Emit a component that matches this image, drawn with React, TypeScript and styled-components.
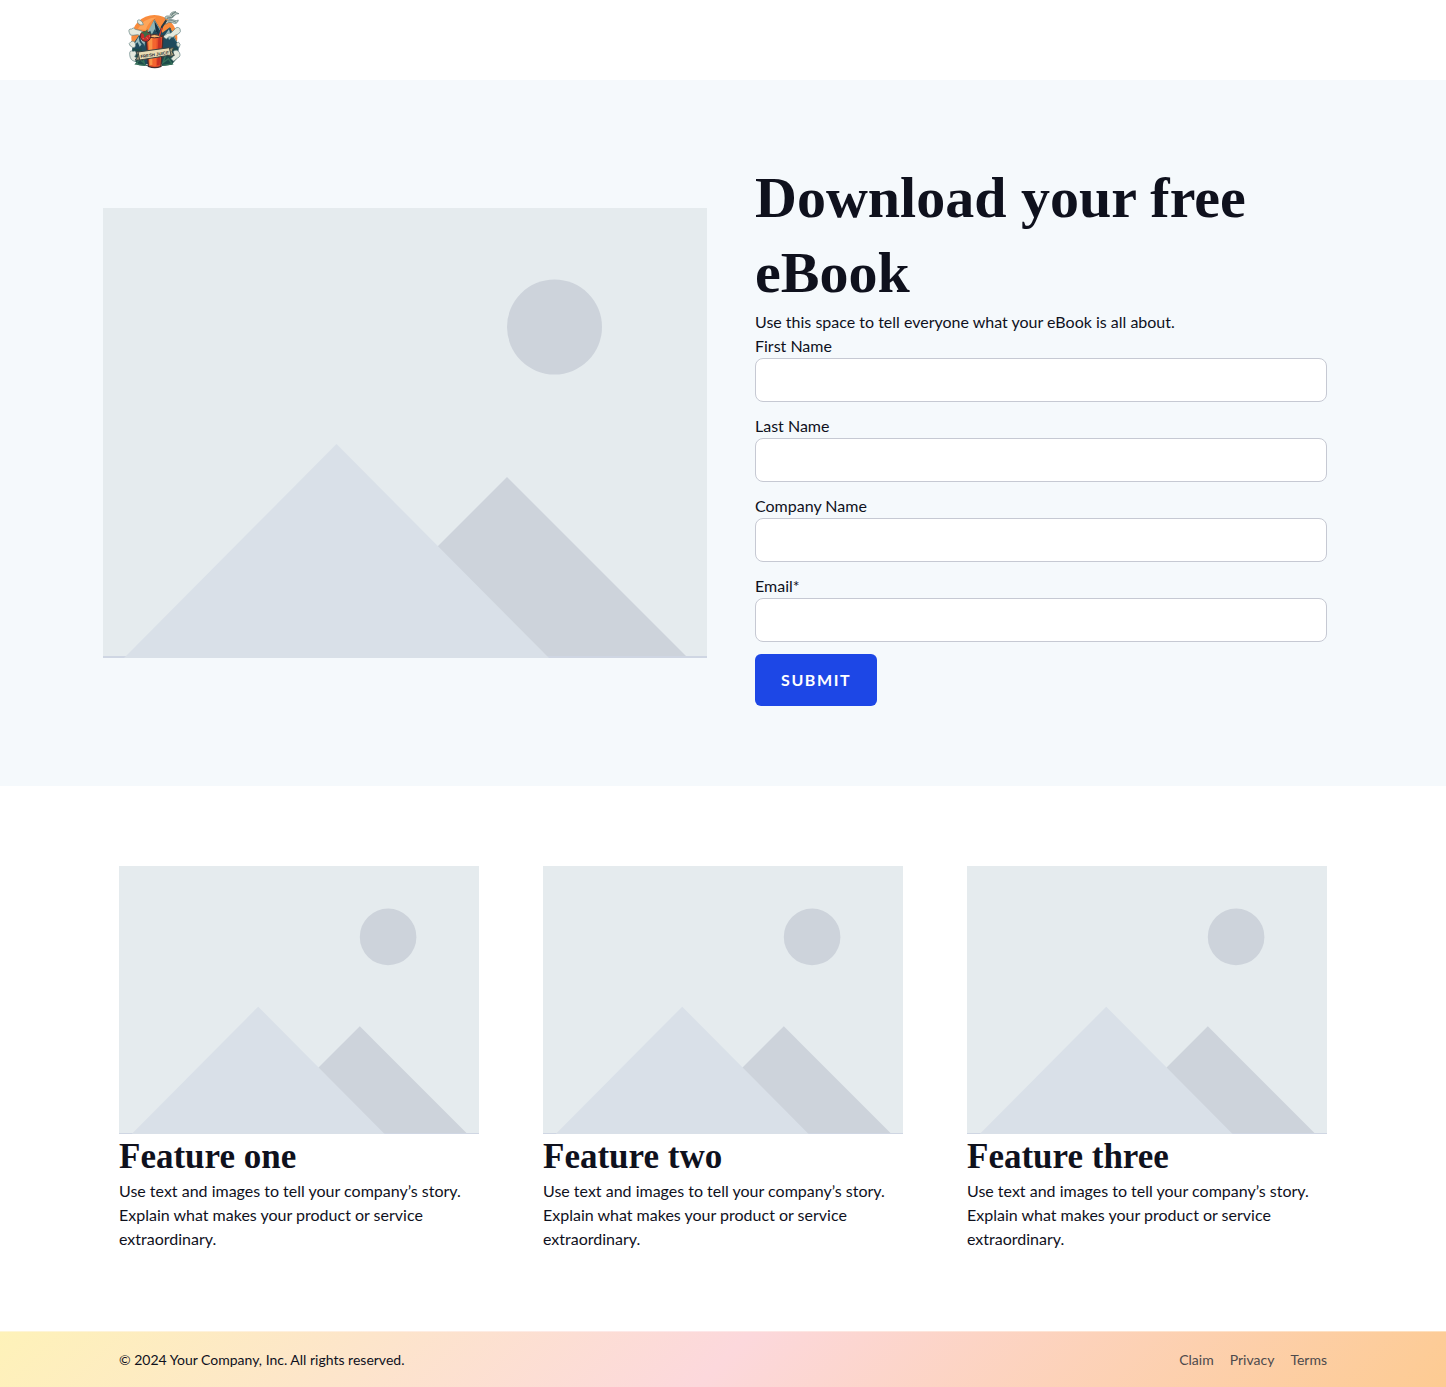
import React from "react";
import styled, { createGlobalStyle } from "styled-components";

const sans = `Lato, "Open Sans", sans-serif`;
const serif = `"Liberation Serif", serif`;

const GlobalStyle = createGlobalStyle`
  *, *::before, *::after { box-sizing: border-box; }
  body { margin: 0; background: #fff; color: #0f111d; font: 400 16px/24px ${sans}; }
  h1, h2, p, ul { margin: 0; padding: 0; }
`;

const Container = styled.div`
  width: 100%;
  max-width: 1240px;
  margin: 0 auto;
  padding: 0 16px;
`;

const Header = styled.header`
  background: #fff;
`;

const HeaderBar = styled(Container)`
  display: flex;
  align-items: center;
  height: 80px;
`;

const LogoLink = styled.a`
  display: block;
  line-height: 0;
`;

const Hero = styled.section`
  background: #f5f9fc;
  padding: 80px 0;
`;

const HeroGrid = styled.div`
  display: grid;
  grid-template-columns: 1fr 1fr;
  align-items: center;
  max-width: 1240px;
  margin: 0 auto;
  @media (max-width: 768px) {
    grid-template-columns: 1fr;
  }
`;

const HeroMedia = styled.div`
  padding-right: 16px;
`;

const HeroContent = styled.div`
  padding: 0 16px 0 32px;
`;

const HeroTitle = styled.h1`
  font: 700 58px/75px ${serif};
`;

const Form = styled.form`
  display: flex;
  flex-direction: column;
  align-items: flex-start;
  gap: 12px;
`;

const Field = styled.div`
  display: flex;
  flex-direction: column;
  width: 100%;
`;

const Input = styled.input`
  width: 100%;
  height: 44px;
  padding: 8px 12px;
  border: 1px solid #c6c9d3;
  border-radius: 8px;
  background: #fff;
  font: inherit;
  color: inherit;
`;

const SubmitButton = styled.button`
  padding: 14px 26px;
  border: 0;
  border-radius: 6px;
  background: #1d47e6;
  color: #fff;
  font: 700 16px/24px ${sans};
  letter-spacing: 0.1em;
  text-transform: uppercase;
  cursor: pointer;
`;

const Features = styled.section`
  padding: 80px 0;
`;

const FeatureGrid = styled(Container)`
  display: grid;
  grid-template-columns: repeat(3, 1fr);
  gap: 64px;
  @media (max-width: 768px) {
    grid-template-columns: 1fr;
  }
`;

const FeatureTitle = styled.h2`
  font: 700 35px/45px ${serif};
`;

const Picture = styled.svg`
  display: block;
  width: 100%;
  height: auto;
`;

const Footer = styled.footer`
  border-top: 1px solid rgba(255, 255, 255, 0.4);
  background: linear-gradient(135deg, #fef2b9, #fcd8dc 50%, #fdcb92);
`;

const FooterBar = styled(Container)`
  display: flex;
  align-items: center;
  justify-content: space-between;
  padding-top: 16px;
  padding-bottom: 16px;
  font-size: 14px;
`;

const FooterLinks = styled.nav`
  display: flex;
  gap: 16px;
`;

const FooterLink = styled.a`
  color: #4d4a4c;
  text-decoration: none;
`;

const Logo = () => (
  <svg width="72" height="72" viewBox="0 0 216 216" role="img" aria-label="Fresh Juice">
    <circle cx="106" cy="102" r="69" fill="#f98b3c" />
    <path d="M56 75Q76 42 112 40Q88 54 80 78Z" fill="#fda55a" />
    <path d="M38 150L42 120L61 92L76 110L106 46L130 86L153 70L180 126L176 160L150 180H60Z" fill="#1f4a5c" />
    <path d="M106 47L84 86L94 80L98 92L107 76L116 90L119 75L126 80Z" fill="#8fb4b4" />
    <path d="M106 50L110 82L118 94L120 74Z" fill="#163345" />
    <path d="M60 96L44 124L56 115L62 128L72 116L76 128L78 112ZM152 73L134 98L146 94L150 108L160 98L170 116L174 114Z" fill="#9bbdbf" />
    <path d="M61 96L64 112L76 128M152 73L157 92L172 118" fill="none" stroke="#214f61" strokeWidth="5" />
    <path d="M40 133Q56 138 68 132L72 176L90 186L60 184L42 166ZM134 132H174L178 158L158 182L128 186Z" fill="#1d4b49" />
    <path d="M68 150L76 178L62 166L50 180L78 184M142 148L132 176L148 164L160 180L132 184" fill="none" stroke="#36705a" strokeWidth="4" />
    <g fill="#e4e9dd" stroke="#5f7f80" strokeWidth="2">
      <path d="M31 86Q26 74 38 75Q42 68 49 76L66 80L80 88L73 98L56 92L42 94Q32 96 31 86Z" />
      <path d="M132 98L146 88L156 87L166 77Q174 65 183 74Q188 84 178 90Q168 92 162 100L150 98L142 105Z" />
      <path d="M57 58Q52 46 62 48Q72 52 73 62Q64 66 57 58Z" />
      <path d="M34 126Q26 118 36 113Q46 108 49 119Q52 130 42 131ZM174 126Q170 116 178 114Q187 120 181 130Z" />
      <path d="M32 151Q31 137 43 142Q52 139 52 149L47 158L57 163L48 172Q33 170 32 151Z" />
      <path d="M163 142Q174 134 181 145Q187 157 176 162L164 172L156 164L164 155Z" />
    </g>
    <path d="M138 53Q150 43 161 47Q173 53 178 48Q175 63 160 56Q148 52 140 61ZM139 46Q135 34 150 36Q161 36 159 29Q172 22 180 29Q168 28 166 36Q160 45 148 43ZM153 31Q158 21 171 23Q161 27 159 34Z" fill="#c3d0c5" stroke="#5b7474" strokeWidth="2" />
    <path d="M144 42Q158 44 166 33M146 51Q160 47 172 55" fill="none" stroke="#405d62" strokeWidth="2" />
    <path d="M81 96H132L126 187Q108 195 88 187Z" fill="#e54e29" stroke="#472c2c" strokeWidth="4" />
    <path d="M87 102H101V184H92Z" fill="#fb9445" />
    <path d="M101 102H113L111 186H101Z" fill="#f4642f" />
    <path d="M118 102H127L122 184H114Z" fill="#c93124" />
    <path d="M81 96Q106 87 132 96Q106 107 81 96Z" fill="#f8b66e" stroke="#4a2c2a" strokeWidth="3" />
    <path d="M121 97L129 68L142 49" fill="none" stroke="#263944" strokeWidth="6" />
    <path d="M121 96L129 72" fill="none" stroke="#d83c2d" strokeWidth="4" />
    <path d="M65 89Q73 80 86 84Q100 90 94 103Q88 117 71 110Q61 102 65 89Z" fill="#c92c2b" stroke="#512a2c" strokeWidth="3" />
    <path d="M65 83L76 84L86 76L85 87L99 89L84 94L76 103L75 92Z" fill="#3e6a45" />
    <path d="M72 103L74 105M83 101L86 103M91 96L93 98" stroke="#f4a287" strokeWidth="3" />
    <path d="M51 143L64 142L66 168L49 168L57 156ZM150 134L164 130L159 143L166 154L150 158Z" fill="#a89f78" stroke="#344447" strokeWidth="3" />
    <path d="M57 144L151 131L156 153L62 168Z" fill="#e9dcb4" stroke="#3a4341" strokeWidth="3" />
    <text x="65" y="162" transform="rotate(-8 65 162)" fill="#1e2b33" fontFamily="Liberation Sans" fontSize="13" fontWeight="700">FRESH JUICE</text>
  </svg>
);

const Placeholder = () => (
  <Picture viewBox="0 0 604 450" role="img" aria-label="Placeholder landscape">
    <rect width="604" height="450" fill="#e5ebee" />
    <rect y="448" width="604" height="2" fill="#cfd6e3" />
    <circle cx="451.5" cy="119" r="47.5" fill="#cdd3db" />
    <path d="M404 269L583 448H225Z" fill="#cdd3db" />
    <path d="M233.500 236L446 450H21Z" fill="#d9e0e8" />
  </Picture>
);

const fields = [
  { id: "firstname", label: "First Name", type: "text" },
  { id: "lastname", label: "Last Name", type: "text" },
  { id: "company", label: "Company Name", type: "text" },
  { id: "email", label: "Email*", type: "email" },
];

const features = ["Feature one", "Feature two", "Feature three"];

export default function App() {
  return (
    <>
      <GlobalStyle />
      <Header>
        <HeaderBar>
          <LogoLink href="#">
            <Logo />
          </LogoLink>
        </HeaderBar>
      </Header>
      <main>
        <Hero>
          <HeroGrid>
            <HeroMedia>
              <Placeholder />
            </HeroMedia>
            <HeroContent>
              <HeroTitle>Download your free eBook</HeroTitle>
              <p>Use this space to tell everyone what your eBook is all about.</p>
              <Form onSubmit={(event) => event.preventDefault()}>
                {fields.map((field) => (
                  <Field key={field.id}>
                    <label htmlFor={field.id}>{field.label}</label>
                    <Input id={field.id} name={field.id} type={field.type} required={field.id === "email"} />
                  </Field>
                ))}
                <SubmitButton type="submit">Submit</SubmitButton>
              </Form>
            </HeroContent>
          </HeroGrid>
        </Hero>
        <Features>
          <FeatureGrid>
            {features.map((title) => (
              <article key={title}>
                <Placeholder />
                <FeatureTitle>{title}</FeatureTitle>
                <p>
                  Use text and images to tell your company’s story. Explain what makes your product or service
                  extraordinary.
                </p>
              </article>
            ))}
          </FeatureGrid>
        </Features>
      </main>
      <Footer>
        <FooterBar>
          <p>© 2024 Your Company, Inc. All rights reserved.</p>
          <FooterLinks aria-label="Legal">
            <FooterLink href="#claim">Claim</FooterLink>
            <FooterLink href="#privacy">Privacy</FooterLink>
            <FooterLink href="#terms">Terms</FooterLink>
          </FooterLinks>
        </FooterBar>
      </Footer>
    </>
  );
}
